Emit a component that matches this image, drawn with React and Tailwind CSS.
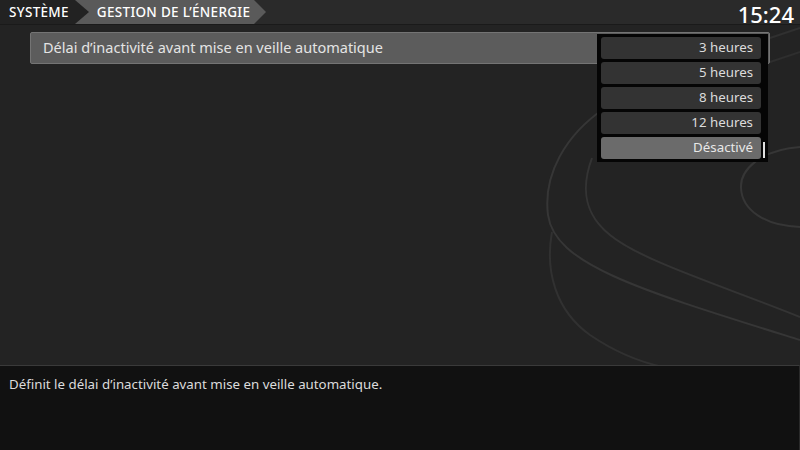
import React from "react";

const font = { fontFamily: '"Noto Sans", "Liberation Sans", sans-serif' };

function Item({ label, selected }) {
  return (
    <div
      className={`h-[22px] rounded-[3px] flex items-center justify-end pr-[8px] text-[13.3px] leading-none ${
        selected ? "bg-[#6b6b6b] text-[#e8e8e8]" : "bg-[#333333] text-[#dcdcdc]"
      }`}
    >
      {label}
    </div>
  );
}

export default function App() {
  return (
    <div className="w-[800px] h-[450px] bg-[#232323] flex flex-col overflow-hidden relative" style={font}>
      <svg className="absolute left-0 top-0 pointer-events-none" width="800" height="450" viewBox="0 0 800 450" fill="none">
        <path d="M605 108 C 565 135, 543 175, 548 215 C 555 265, 640 290, 800 340" stroke="#363636" strokeWidth="2" />
        <path d="M592 158 C 580 190, 585 215, 610 235 C 640 260, 720 285, 800 317" stroke="#343434" strokeWidth="2" />
        <path d="M552 232 C 545 270, 555 310, 590 335 C 615 352, 640 362, 663 367" stroke="#313131" strokeWidth="2" />
        <path d="M800 147 C 760 150, 740 170, 741 188 C 742 210, 765 226, 800 227" stroke="#363636" strokeWidth="2" />
        <path d="M770 38 L 800 28" stroke="#303030" strokeWidth="2" />
        <path d="M770 62 L 800 52" stroke="#2e2e2e" strokeWidth="2" />
      </svg>

      {/* header */}
      <div className="h-[25px] bg-[#2a2a2a] border-b border-[#1a1a1a] flex items-stretch relative">
        <div className="flex items-stretch">
          <div className="bg-[#222222] text-white text-[13.5px] font-medium flex items-center pl-[9px] pr-[6px] tracking-[0.3px]">
            SYSTÈME
          </div>
          <svg width="14" height="24" viewBox="0 0 14 24" className="block bg-[#5a5a5a]">
            <path d="M0 0 L14 12 L0 24 Z" fill="#222222" />
          </svg>
          <div className="bg-[#5a5a5a] text-white text-[13.5px] font-medium flex items-center pl-[8px] pr-[4px] tracking-[0.3px]">
            GESTION DE L’ÉNERGIE
          </div>
          <svg width="12" height="24" viewBox="0 0 12 24" className="block">
            <path d="M0 0 L12 12 L0 24 Z" fill="#5a5a5a" />
          </svg>
        </div>
        <div className="flex-1" />
        <div className="text-white text-[22px] font-medium leading-none flex items-center pr-[6px] pt-[3px]">15:24</div>
      </div>

      {/* main */}
      <div className="flex-1 relative pt-[7px] pl-[30px] pr-[30px]">
        <div className="h-[32px] bg-[#5c5c5c] border border-[#747474] rounded-[2px] flex items-center pl-[12px] text-[14.5px] text-[#e4e4e4]">
          Délai d’inactivité avant mise en veille automatique
        </div>
        <div className="absolute left-[597px] top-[9px] w-[171px] bg-[#050505] pl-[4px] pr-[7px] py-[3px] flex flex-col gap-[3px]">
          <Item label="3 heures" />
          <Item label="5 heures" />
          <Item label="8 heures" />
          <Item label="12 heures" />
          <Item label="Désactivé" selected />
          <div className="absolute right-[3px] bottom-[4px] w-[2px] h-[16px] bg-[#e0e0e0]" />
        </div>
      </div>

      {/* description */}
      <div className="h-[85px] bg-[#111111] border-t border-[#3a3a3a] border-r border-r-[#2a2a2a] px-[9px] pt-[9px] text-[13.3px] text-[#dcdcdc] relative">
        Définit le délai d’inactivité avant mise en veille automatique.
      </div>
    </div>
  );
}
